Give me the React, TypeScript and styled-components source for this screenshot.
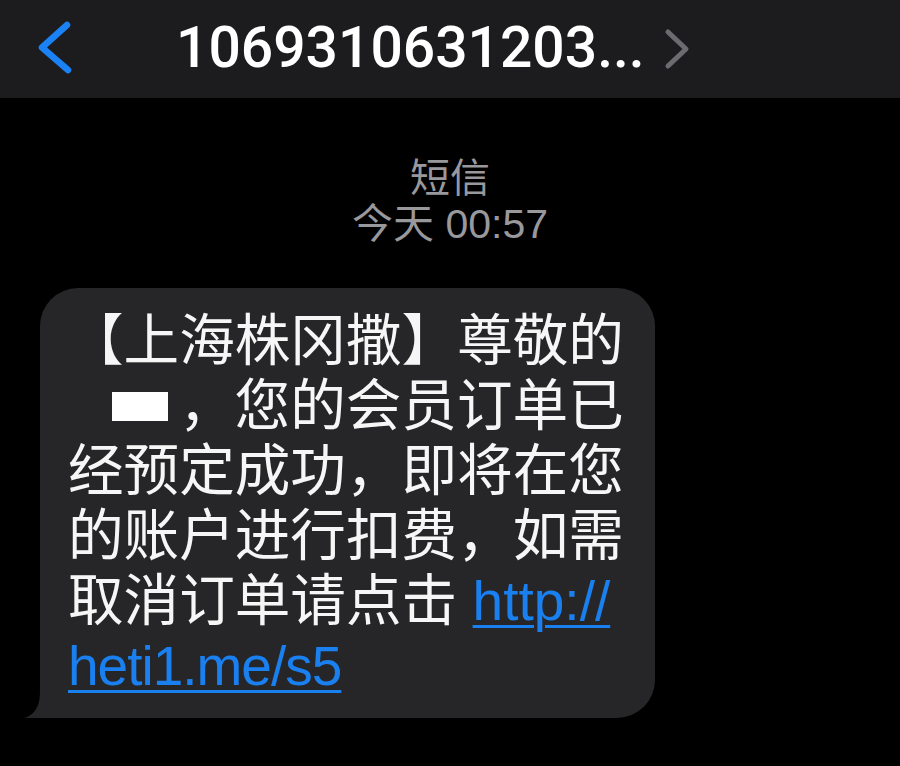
import React from "react";
import styled, { createGlobalStyle } from "styled-components";

const Global = createGlobalStyle`
  html, body { margin: 0; padding: 0; background: #000; }
  body { font-family: "Liberation Sans", "Noto Sans CJK SC", sans-serif; }
`;

const Page = styled.div`
  width: 900px;
  min-height: 766px;
  background: #000;
  display: flex;
  flex-direction: column;
`;

const Header = styled.header`
  height: 98px;
  background: #1c1c1e;
  display: flex;
  align-items: center;
  padding-left: 38px;
  box-sizing: border-box;
`;

const BackIcon = styled.svg`
  width: 36px;
  height: 56px;
  flex: none;
  margin-top: -3px;
`;

const TitleGroup = styled.div`
  display: flex;
  align-items: center;
  margin-left: 102px;
  gap: 19px;
  margin-top: -3px;
`;

const Title = styled.h1`
  margin: 0;
  font-family: Roboto, "Liberation Sans", sans-serif;
  font-weight: 500;
  font-size: 57px;
  letter-spacing: 0;
  color: #ffffff;
  line-height: 1;
`;

const ForwardIcon = styled.svg`
  width: 26px;
  height: 42px;
  flex: none;
  margin-top: 3px;
`;

const Meta = styled.div`
  margin-top: 57px;
  text-align: center;
  color: #98989d;
  font-size: 40px;
  line-height: 46px;
`;

const MetaLine = styled.div``;

const TimeLine = styled.div`
  font-size: 41px;
`;

const Bubble = styled.div`
  position: relative;
  margin: 41px 0 0 40px;
  width: 615px;
  box-sizing: border-box;
  padding: 21px 28px 19px 28px;
  background: #262628;
  border-radius: 38px;
  color: #f6f6f6;
  font-size: 55.6px;
  line-height: 65px;
`;

const Tail = styled.svg`
  position: absolute;
  left: -16px;
  bottom: 0;
  width: 56px;
  height: 40px;
`;

const Line = styled.span`
  display: block;
  white-space: nowrap;
  position: relative;
`;

const Redacted = styled.span`
  display: inline-block;
  width: 56px;
  height: 29px;
  margin-left: 44px;
  margin-right: 11px;
  background: #ffffff;
  vertical-align: middle;
  position: relative;
  top: -4px;
`;

const Link = styled.a<{ $tight?: boolean }>`
  color: #1a80f0;
  text-decoration: underline;
  text-decoration-thickness: 3px;
  text-underline-offset: 5px;
  font-family: "Liberation Sans", sans-serif;
  font-size: 55px;
  letter-spacing: ${(p) => (p.$tight ? "-1px" : "0px")};
`;

export default function App() {
  return (
    <Page>
      <Global />
      <Header>
        <BackIcon viewBox="0 0 36 56">
          <path
            d="M29 5 L4 27.5 L30 50"
            fill="none"
            stroke="#1a82f5"
            strokeWidth="6.5"
            strokeLinecap="round"
            strokeLinejoin="round"
          />
        </BackIcon>
        <TitleGroup>
          <Title>1069310631203...</Title>
          <ForwardIcon viewBox="0 0 26 42">
            <path
              d="M4 4 L22 21 L4 38"
              fill="none"
              stroke="#6c6c70"
              strokeWidth="5"
              strokeLinecap="round"
              strokeLinejoin="round"
            />
          </ForwardIcon>
        </TitleGroup>
      </Header>

      <Meta>
        <MetaLine>短信</MetaLine>
        <TimeLine>今天 00:57</TimeLine>
      </Meta>

      <Bubble>
        <Tail viewBox="0 0 56 40">
          <path
            d="M16 0 L16 14 C16 28 11 36 1 40 L56 40 L56 0 Z"
            fill="#262628"
          />
        </Tail>
        <Line>【上海株冈撒】尊敬的</Line>
        <Line>
          <Redacted aria-label="已遮挡" />，您的会员订单已
        </Line>
        <Line>经预定成功，即将在您</Line>
        <Line>的账户进行扣费，如需</Line>
        <Line>
          取消订单请点击 <Link href="#">http://</Link>
        </Line>
        <Line>
          <Link href="#" $tight>heti1.me/s5</Link>
        </Line>
      </Bubble>
    </Page>
  );
}
